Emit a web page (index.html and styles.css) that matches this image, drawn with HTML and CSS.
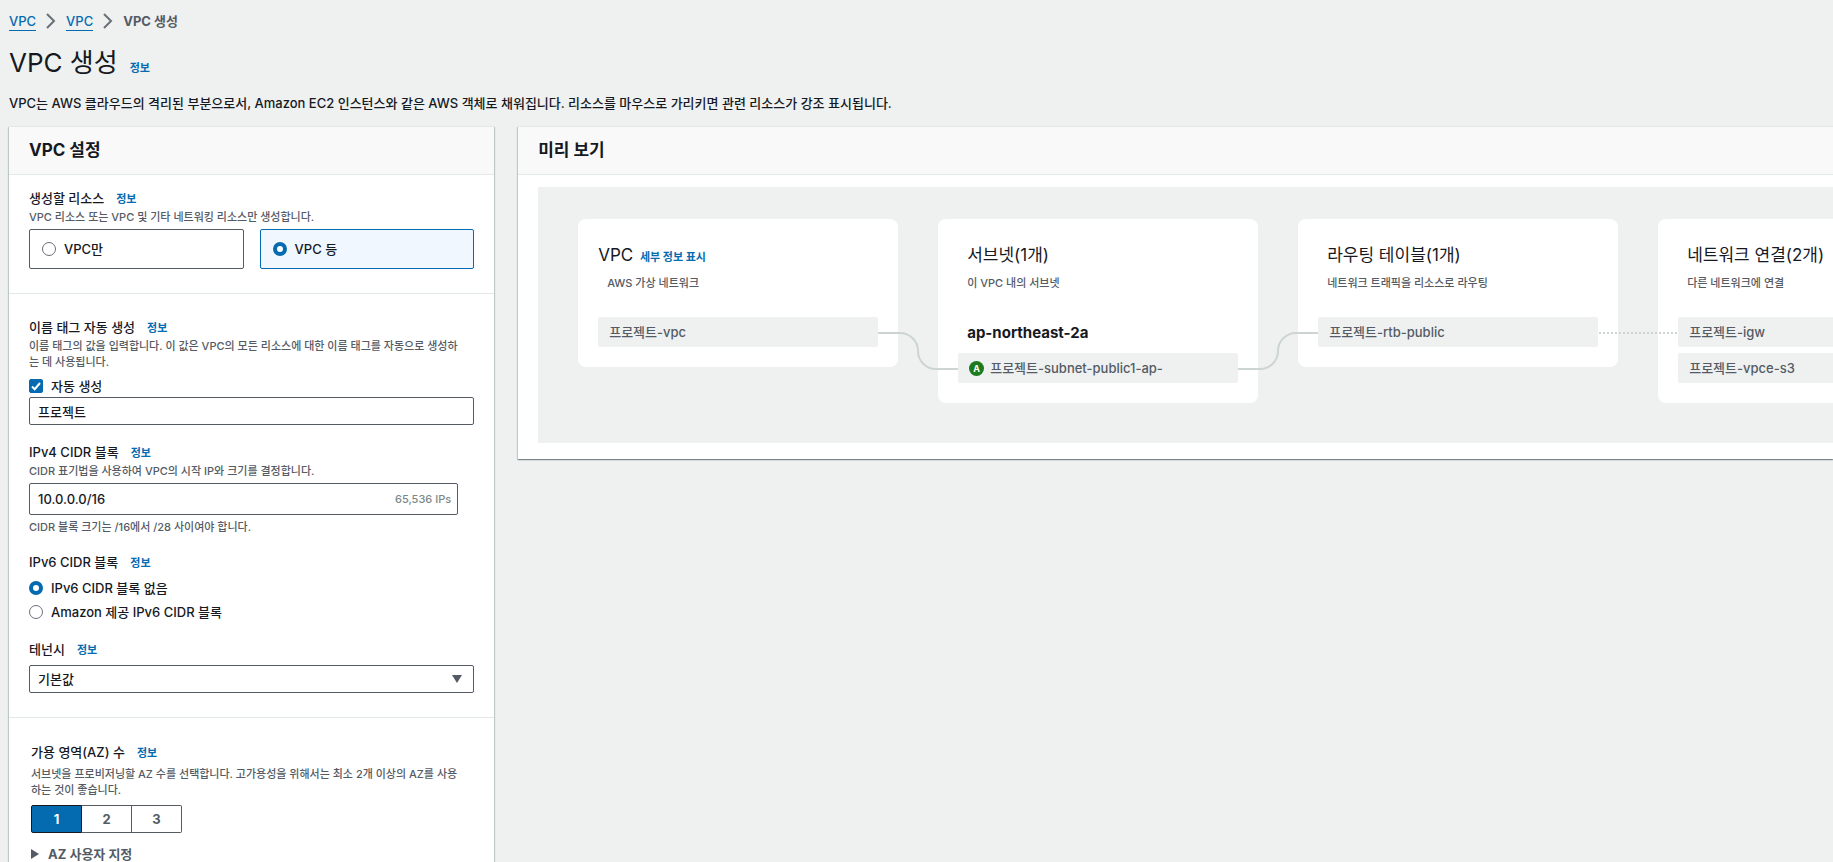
FILE: index.html
```html
<!doctype html>
<html lang="ko">
    <head>
        <meta charset="UTF-8" />
        <meta name="viewport" content="width=device-width, initial-scale=1.0" />
        <title>VPC 생성</title>
        <link rel="stylesheet" href="styles.css">
    </head>
    <body>
        <nav class="breadcrumb">
            <a href="#">VPC</a>
            <svg class="chevron" width="10" height="16" viewBox="0 0 10 16"><path d="M1 1l7 7-7 7" /></svg>
            <a href="#">VPC</a>
            <svg class="chevron" width="10" height="16" viewBox="0 0 10 16"><path d="M1 1l7 7-7 7" /></svg>
            <span class="current">VPC 생성</span>
        </nav>

        <header class="page-header">
            <div class="title-row">
                <h1>VPC 생성</h1>
                <a class="info" href="#">정보</a>
            </div>
            <p>VPC는 AWS 클라우드의 격리된 부분으로서, Amazon EC2 인스턴스와 같은 AWS 객체로 채워집니다. 리소스를 마우스로 가리키면 관련 리소스가 강조 표시됩니다.</p>
        </header>

        <main class="layout">
            <form class="panel">
                <h2 class="panel-header">VPC 설정</h2>

                <section class="section">
                    <div class="label-row">
                        <span>생성할 리소스</span>
                        <a class="info" href="#">정보</a>
                    </div>
                    <p class="hint">VPC 리소스 또는 VPC 및 기타 네트워킹 리소스만 생성합니다.</p>
                    <div class="tiles">
                        <label class="tile">
                            <input type="radio" name="resource" />
                            VPC만
                        </label>
                        <label class="tile selected">
                            <input type="radio" name="resource" checked />
                            VPC 등
                        </label>
                    </div>
                </section>

                <section class="section spaced">
                    <div class="field">
                        <div class="label-row">
                            <label for="name-tag">이름 태그 자동 생성</label>
                            <a class="info" href="#">정보</a>
                        </div>
                        <p class="hint">이름 태그의 값을 입력합니다. 이 값은 VPC의 모든 리소스에 대한 이름 태그를 자동으로 생성하는 데 사용됩니다.</p>
                        <label class="choice">
                            <input type="checkbox" checked />
                            자동 생성
                        </label>
                        <input class="text-input" id="name-tag" type="text" value="프로젝트" />
                    </div>

                    <div class="field">
                        <div class="label-row">
                            <label for="cidr">IPv4 CIDR 블록</label>
                            <a class="info" href="#">정보</a>
                        </div>
                        <p class="hint">CIDR 표기법을 사용하여 VPC의 시작 IP와 크기를 결정합니다.</p>
                        <div class="cidr-box">
                            <input id="cidr" type="text" value="10.0.0.0/16" />
                            <span>65,536 IPs</span>
                        </div>
                        <p class="hint">CIDR 블록 크기는 /16에서 /28 사이여야 합니다.</p>
                    </div>

                    <div class="field">
                        <div class="label-row">
                            <span>IPv6 CIDR 블록</span>
                            <a class="info" href="#">정보</a>
                        </div>
                        <label class="choice">
                            <input type="radio" name="ipv6" checked />
                            IPv6 CIDR 블록 없음
                        </label>
                        <label class="choice">
                            <input type="radio" name="ipv6" />
                            Amazon 제공 IPv6 CIDR 블록
                        </label>
                    </div>

                    <div class="field">
                        <div class="label-row">
                            <label for="tenancy">테넌시</label>
                            <a class="info" href="#">정보</a>
                        </div>
                        <div class="select-box">
                            <select id="tenancy">
                                <option>기본값</option>
                                <option>전용</option>
                            </select>
                            <svg width="10" height="8" viewBox="0 0 10 8"><path d="M0 0h10L5 8z" /></svg>
                        </div>
                    </div>
                </section>

                <section class="section spaced zones">
                    <div class="label-row">
                        <span>가용 영역(AZ) 수</span>
                        <a class="info" href="#">정보</a>
                    </div>
                    <p class="hint">서브넷을 프로비저닝할 AZ 수를 선택합니다. 고가용성을 위해서는 최소 2개 이상의 AZ를 사용하는 것이 좋습니다.</p>
                    <div class="segments">
                        <button class="segment active" type="button">1</button>
                        <button class="segment" type="button">2</button>
                        <button class="segment" type="button">3</button>
                    </div>
                    <button class="expander" type="button">
                        <svg width="8" height="10" viewBox="0 0 8 10"><path d="M0 0l8 5-8 5z" /></svg>
                        AZ 사용자 지정
                    </button>
                </section>
            </form>

            <section class="panel preview">
                <h2 class="panel-header">미리 보기</h2>
                <div class="canvas">
                    <article class="card first">
                        <h3>VPC <a class="info" href="#">세부 정보 표시</a></h3>
                        <p>AWS 가상 네트워크</p>
                        <div class="resource">프로젝트-vpc</div>
                    </article>
                    <article class="card">
                        <h3>서브넷(1개)</h3>
                        <p>이 VPC 내의 서브넷</p>
                        <h4>ap-northeast-2a</h4>
                        <div class="resource"><span class="zone-badge">A</span>프로젝트-subnet-public1-ap-</div>
                    </article>
                    <article class="card">
                        <h3>라우팅 테이블(1개)</h3>
                        <p>네트워크 트래픽을 리소스로 라우팅</p>
                        <div class="resource">프로젝트-rtb-public</div>
                    </article>
                    <article class="card">
                        <h3>네트워크 연결(2개)</h3>
                        <p>다른 네트워크에 연결</p>
                        <div class="resource">프로젝트-igw</div>
                        <div class="resource">프로젝트-vpce-s3</div>
                    </article>
                    <svg class="connectors" width="1160" height="200" viewBox="0 0 1160 200">
                        <path d="M340 146h22a18 18 0 0 1 18 18a18 18 0 0 0 18 18h22" />
                        <path d="M700 182h22a18 18 0 0 0 18-18a18 18 0 0 1 18-18h22" />
                        <path class="dotted" d="M1061 146h79" />
                    </svg>
                </div>
            </section>
        </main>
    </body>
</html>
```

FILE: styles.css
```css
* {
    box-sizing: border-box;
}

body {
    height: 100vh;
    margin: 0;
    padding: 11px 0 0 9px;
    overflow: hidden;
    background-color: #eff1f1;
    color: #16191f;
    font-family: Inter, "Noto Sans CJK KR", sans-serif;
    font-size: 13px;
    font-weight: 500;
    line-height: 20px;
}

h1,
h2,
h3,
h4,
p {
    margin: 0;
}

input,
select,
button {
    font: inherit;
    color: inherit;
    margin: 0;
}

a {
    color: #056bb0;
    text-decoration: none;
}

.info {
    font-size: 11px;
    font-weight: 700;
    line-height: 16px;
}

/* breadcrumb and page title */

.breadcrumb {
    display: flex;
    align-items: center;
    gap: 10px;
    height: 20px;
    color: #545b64;
}

.breadcrumb a {
    border-bottom: 1px solid #056bb0;
    line-height: 18px;
}

.breadcrumb .current {
    font-weight: 700;
}

.chevron {
    fill: none;
    stroke: #687078;
    stroke-width: 2;
}

.title-row {
    display: flex;
    align-items: baseline;
    gap: 12px;
    margin-top: 14px;
}

h1 {
    font-size: 26px;
    font-weight: 400;
    line-height: 36px;
}

.page-header p {
    margin: 12px 0 13px;
}

/* panels */

.layout {
    display: grid;
    grid-template-columns: 26.6% minmax(0, 1fr);
    gap: 24px;
    align-items: start;
}

.panel {
    background-color: #fff;
    border-top: 1px solid #e3e8e8;
    box-shadow:
        0 1px 1px 0 rgba(0, 28, 36, 0.3),
        1px 1px 1px 0 rgba(0, 28, 36, 0.15),
        -1px 1px 1px 0 rgba(0, 28, 36, 0.15);
}

.panel-header {
    padding: 11px 20px 12px;
    border-bottom: 1px solid #e3e8e8;
    background-color: #f9f9f9;
    font-size: 17px;
    font-weight: 700;
    line-height: 24px;
}

.section {
    padding: 13px 20px 24px;
}

.section.spaced {
    padding-top: 23px;
    border-top: 1px solid #e3e8e8;
}

.field + .field {
    margin-top: 17px;
}

.label-row {
    display: flex;
    align-items: baseline;
    gap: 12px;
    height: 20px;
}

.hint {
    margin-top: 1px;
    padding-right: 8px;
    color: #545b64;
    font-size: 11px;
    line-height: 16px;
}

/* form controls */

input[type="radio"],
input[type="checkbox"] {
    appearance: none;
    flex: none;
    width: 14px;
    height: 14px;
    border: 1px solid #687078;
    background-color: #fff;
}

input[type="radio"] {
    border-radius: 50%;
}

input[type="radio"]:checked {
    border: 4px solid #056bb0;
}

input[type="checkbox"] {
    border-radius: 2px;
}

input[type="checkbox"]:checked {
    border-color: #056bb0;
    background: #056bb0 url("data:image/svg+xml,%3Csvg xmlns='http://www.w3.org/2000/svg' viewBox='0 0 12 12'%3E%3Cpath d='M2 6.5l2.700 2.700L10 3' fill='none' stroke='white' stroke-width='2'/%3E%3C/svg%3E");
}

.tiles {
    display: grid;
    grid-template-columns: 1fr 1fr;
    gap: 16px;
    margin-top: 4px;
}

.tile {
    display: flex;
    align-items: center;
    gap: 8px;
    height: 40px;
    padding: 0 12px;
    border: 1px solid #545b64;
    border-radius: 2px;
}

.tile.selected {
    border-color: #056bb0;
    background-color: #f0f7fe;
}

.choice {
    display: flex;
    align-items: center;
    gap: 8px;
    height: 20px;
    margin-top: 6px;
}

.choice + .choice {
    margin-top: 4px;
}

.text-input,
.cidr-box,
.select-box {
    border: 1px solid #545b64;
    border-radius: 2px;
    background-color: #fff;
}

.text-input {
    display: block;
    width: 100%;
    height: 28px;
    margin-top: 1px;
    padding: 0 8px;
}

.cidr-box {
    display: flex;
    align-items: center;
    height: 32px;
    margin: 4px 16px 4px 0;
    padding: 0 6px 0 8px;
}

.cidr-box input {
    flex: 1;
    min-width: 0;
    padding: 0;
    border: 0;
    outline: 0;
}

.cidr-box span {
    color: #7b8887;
    font-size: 11px;
}

.select-box {
    display: grid;
    align-items: center;
    height: 28px;
    margin-top: 6px;
}

.select-box select,
.select-box svg {
    grid-area: 1 / 1;
}

.select-box select {
    appearance: none;
    height: 26px;
    padding: 0 8px;
    border: 0;
    background: none;
}

.select-box svg {
    justify-self: end;
    margin-right: 11px;
    fill: #545b64;
    pointer-events: none;
}

.section.zones {
    padding: 24px 20px 40px 22px;
}

.zones .hint {
    margin-top: 4px;
}

.segments {
    display: flex;
    margin-top: 7px;
}

.segment {
    width: 50px;
    height: 28px;
    padding: 0;
    border: 1px solid #545b64;
    border-left-width: 0;
    background-color: #fff;
    color: #545b64;
    font-weight: 700;
}

.segment.active {
    width: 51px;
    border: 1px solid #16191f;
    border-radius: 2px 0 0 2px;
    background-color: #056bb0;
    color: #fff;
}

.segment:last-child {
    border-radius: 0 2px 2px 0;
}

.expander {
    display: flex;
    align-items: center;
    gap: 9px;
    height: 20px;
    margin-top: 11px;
    padding: 0;
    border: 0;
    background: none;
    color: #545b64;
    font-weight: 700;
}

.expander svg {
    fill: #545b64;
}

/* preview diagram */

.preview {
    padding-bottom: 16px;
}

.canvas {
    position: relative;
    display: flex;
    align-items: flex-start;
    gap: 40px;
    margin: 12px 0 0 20px;
    padding: 32px 40px 40px;
    overflow: hidden;
    background-color: #eff1f1;
}

.card {
    flex: 0 0 320px;
    padding: 24px 20px 20px;
    border-radius: 8px;
    background-color: #fff;
}

.card h3,
.card h4,
.card p {
    padding-left: 9px;
}

.card h3 {
    height: 24px;
    font-size: 17px;
    font-weight: 400;
    line-height: 24px;
}

.card.first h3 {
    padding-left: 0;
}

.card h3 .info {
    margin-left: 2px;
}

.card p {
    margin: 6px 0 24px;
    color: #545b64;
    font-size: 11px;
}

.card h4 {
    padding-top: 2px;
    margin-bottom: 6px;
    font-size: 15px;
    line-height: 28px;
}

.resource {
    display: flex;
    align-items: center;
    height: 30px;
    padding: 0 11px;
    border-radius: 2px;
    background-color: #eff1f1;
    color: #545b64;
}

.resource + .resource {
    margin-top: 6px;
}

.zone-badge {
    width: 15px;
    height: 15px;
    margin-right: 6px;
    border-radius: 50%;
    background-color: #1d7a1d;
    color: #fff;
    font-size: 9px;
    font-weight: 700;
    line-height: 15px;
    text-align: center;
}

.connectors {
    position: absolute;
    top: 0;
    left: 0;
    fill: none;
    stroke: #cdd5d3;
    stroke-width: 2;
    pointer-events: none;
}

.connectors .dotted {
    stroke-dasharray: 2 2;
}
```
